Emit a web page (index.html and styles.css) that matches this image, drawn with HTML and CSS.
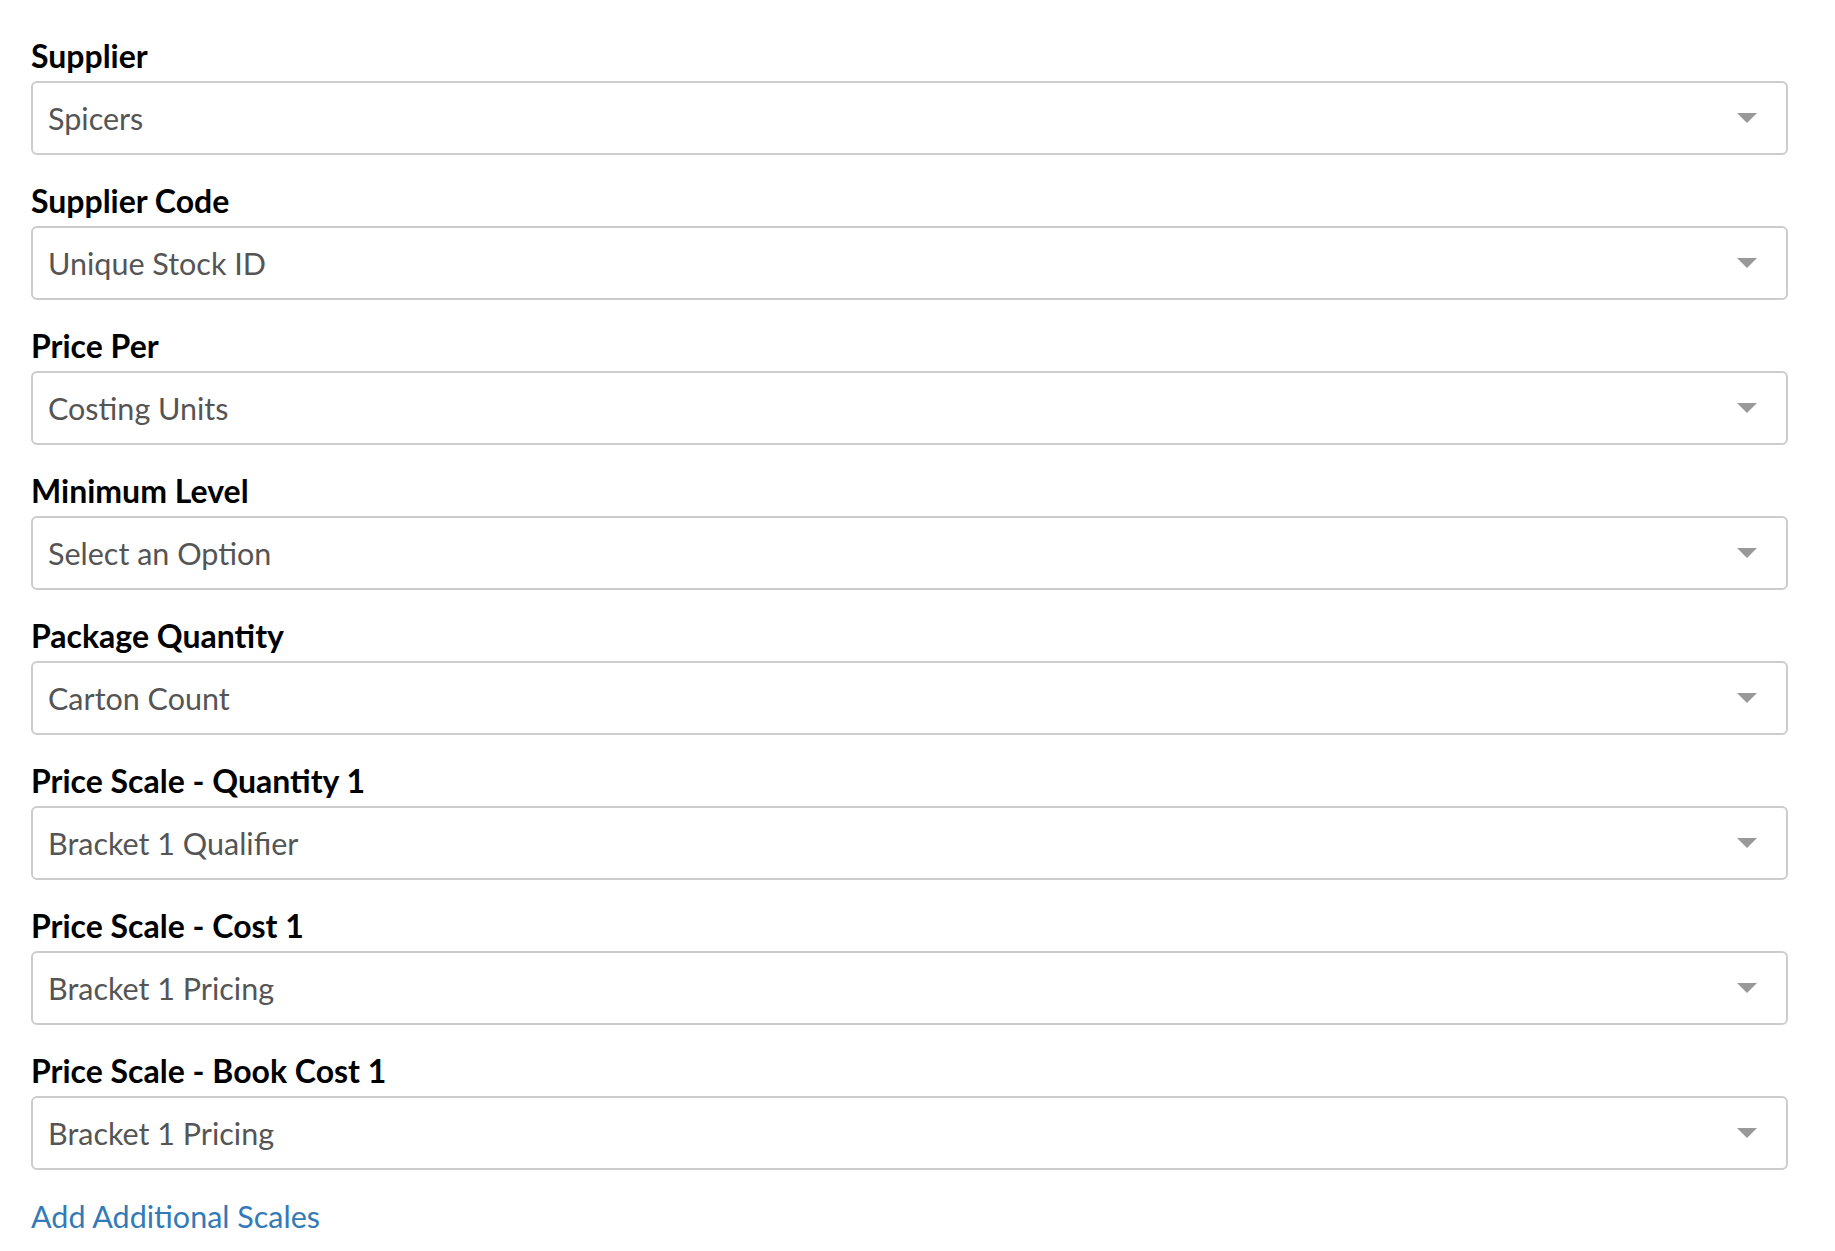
FILE: index.html
```html
<!DOCTYPE html>
<html lang="en">
<head>
<meta charset="utf-8">
<title>Supplier Mapping</title>
<link rel="stylesheet" href="styles.css">
</head>
<body>
<form class="form">
  <div class="field">
    <label class="field-label">Supplier</label>
    <div class="select"><span class="select-value">Spicers</span><svg class="caret" viewBox="0 0 20 10"><path d="M0 0H20L10 10Z"/></svg></div>
  </div>
  <div class="field">
    <label class="field-label">Supplier Code</label>
    <div class="select"><span class="select-value">Unique Stock ID</span><svg class="caret" viewBox="0 0 20 10"><path d="M0 0H20L10 10Z"/></svg></div>
  </div>
  <div class="field">
    <label class="field-label">Price Per</label>
    <div class="select"><span class="select-value">Costing Units</span><svg class="caret" viewBox="0 0 20 10"><path d="M0 0H20L10 10Z"/></svg></div>
  </div>
  <div class="field">
    <label class="field-label">Minimum Level</label>
    <div class="select"><span class="select-value">Select an Option</span><svg class="caret" viewBox="0 0 20 10"><path d="M0 0H20L10 10Z"/></svg></div>
  </div>
  <div class="field">
    <label class="field-label">Package Quantity</label>
    <div class="select"><span class="select-value">Carton Count</span><svg class="caret" viewBox="0 0 20 10"><path d="M0 0H20L10 10Z"/></svg></div>
  </div>
  <div class="field">
    <label class="field-label">Price Scale - Quantity 1</label>
    <div class="select"><span class="select-value">Bracket 1 Qualifier</span><svg class="caret" viewBox="0 0 20 10"><path d="M0 0H20L10 10Z"/></svg></div>
  </div>
  <div class="field">
    <label class="field-label">Price Scale - Cost 1</label>
    <div class="select"><span class="select-value">Bracket 1 Pricing</span><svg class="caret" viewBox="0 0 20 10"><path d="M0 0H20L10 10Z"/></svg></div>
  </div>
  <div class="field">
    <label class="field-label">Price Scale - Book Cost 1</label>
    <div class="select"><span class="select-value">Bracket 1 Pricing</span><svg class="caret" viewBox="0 0 20 10"><path d="M0 0H20L10 10Z"/></svg></div>
  </div>
  <a class="add-link" href="#">Add Additional Scales</a>
</form>
</body>
</html>
```
FILE: styles.css
```css
html, body {
  margin: 0;
  padding: 0;
  background: #fff;
}
body {
  font-family: Lato, "Open Sans", sans-serif;
}
.form {
  padding: 36px 47px 0 31px;
  display: flex;
  flex-direction: column;
}
.field {
  margin-bottom: 26px;
}
.field-label {
  display: block;
  font-size: 32px;
  font-weight: 700;
  line-height: 40px;
  color: #000;
  margin-bottom: 5px;
}
.select {
  box-sizing: border-box;
  height: 74px;
  border: 2px solid #cccccc;
  border-radius: 6px;
  padding: 15px 29px 0 15px;
  display: flex;
  align-items: flex-start;
  justify-content: space-between;
  background: #fff;
}
.select-value {
  font-size: 30.5px;
  line-height: 40px;
  color: #555555;
}
.caret {
  width: 20px;
  height: 10px;
  margin-top: 15px;
  fill: #999999;
}
.add-link {
  align-self: flex-start;
  margin-top: 0;
  font-size: 30.5px;
  line-height: 40px;
  color: #337ab7;
  text-decoration: none;
}
```
